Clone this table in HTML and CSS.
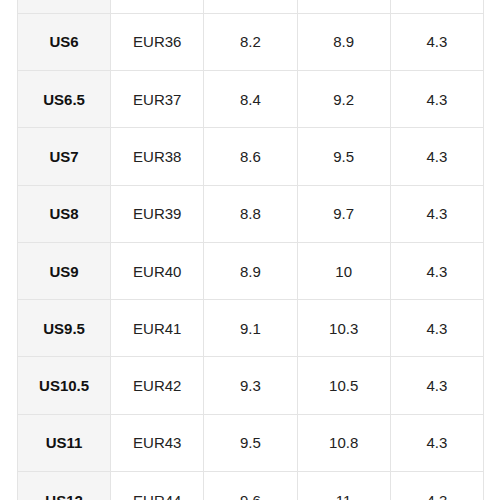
FILE: index.html
```html
<!DOCTYPE html>
<html>
<head>
<meta charset="utf-8">
<link rel="stylesheet" href="styles.css">
</head>
<body>
<div class="page">
<table class="size-table">
<tbody>
<tr><th>US5.5</th><td>EUR35</td><td>8.0</td><td>8.7</td><td>4.3</td></tr>
<tr><th>US6</th><td>EUR36</td><td>8.2</td><td>8.9</td><td>4.3</td></tr>
<tr><th>US6.5</th><td>EUR37</td><td>8.4</td><td>9.2</td><td>4.3</td></tr>
<tr><th>US7</th><td>EUR38</td><td>8.6</td><td>9.5</td><td>4.3</td></tr>
<tr><th>US8</th><td>EUR39</td><td>8.8</td><td>9.7</td><td>4.3</td></tr>
<tr><th>US9</th><td>EUR40</td><td>8.9</td><td>10</td><td>4.3</td></tr>
<tr><th>US9.5</th><td>EUR41</td><td>9.1</td><td>10.3</td><td>4.3</td></tr>
<tr><th>US10.5</th><td>EUR42</td><td>9.3</td><td>10.5</td><td>4.3</td></tr>
<tr><th>US11</th><td>EUR43</td><td>9.5</td><td>10.8</td><td>4.3</td></tr>
<tr><th>US12</th><td>EUR44</td><td>9.6</td><td>11</td><td>4.3</td></tr>
</tbody>
</table>
</div>
</body>
</html>
```
FILE: styles.css
```css
html, body {
  margin: 0;
  padding: 0;
  background: #fff;
  overflow: hidden;
}
.page {
  padding-left: 17px;
  margin-top: -44.6px;
}
.size-table {
  border-collapse: collapse;
  table-layout: fixed;
  width: 467px;
  font-family: "Liberation Sans", Arial, sans-serif;
  font-size: 15px;
  color: #222;
}
.size-table tr {
  height: 57.3px;
}
.size-table th,
.size-table td {
  border: 1px solid #e4e4e4;
  text-align: center;
  vertical-align: middle;
  padding: 0;
}
.size-table th {
  background: #f5f5f5;
  font-weight: bold;
  color: #111;
}
```
